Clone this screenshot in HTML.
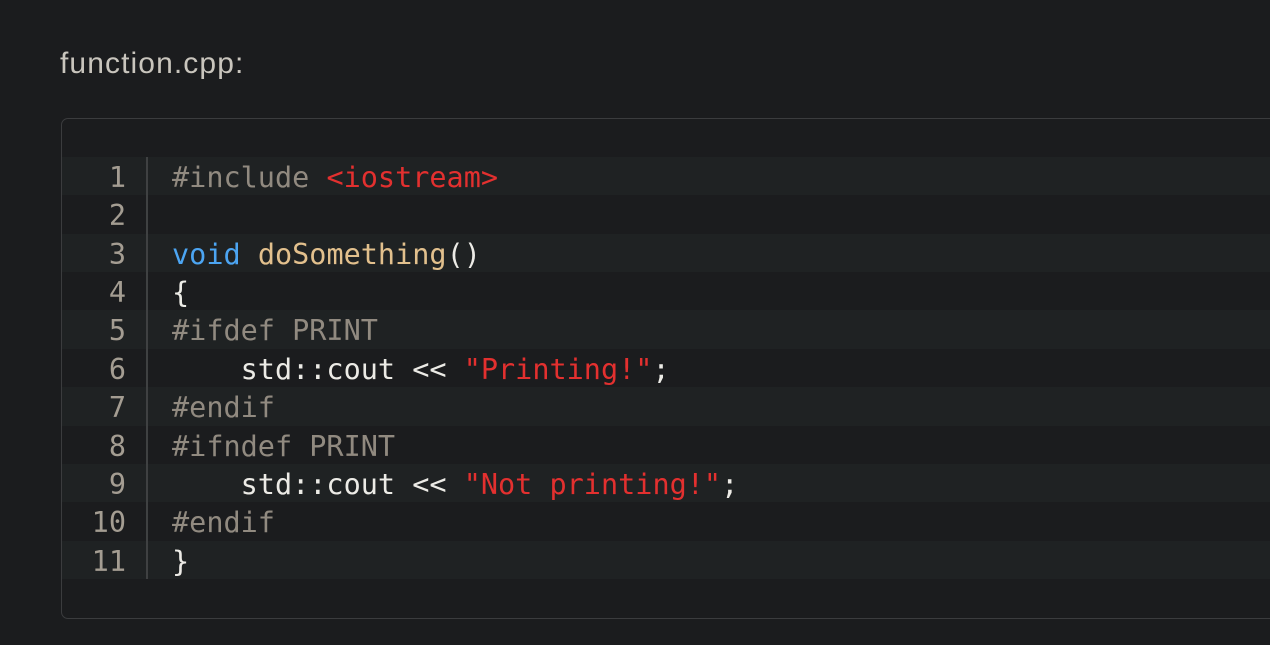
<!DOCTYPE html>
<html><head><meta charset="utf-8"><style>
html,body{margin:0;padding:0;background:#1b1c1e;width:1270px;height:645px;overflow:hidden}
.t{position:absolute;left:60px;top:44px;font-family:"Liberation Sans",sans-serif;font-size:30px;letter-spacing:1.1px;color:#c9c5bd;line-height:40px}
.box{position:absolute;left:61px;top:118px;width:1240px;height:499px;border:1.5px solid #3b3c3e;border-radius:7px;background:#1b1c1e}
.code{position:absolute;left:62px;top:157px;width:1210px;font-family:"DejaVu Sans Mono","Liberation Mono",monospace;font-size:28.5px}
.l{height:38.36px;line-height:38.36px;position:relative;white-space:pre;color:#ecebe6}
.l:nth-child(odd){background:#1f2223}
.n,.c{top:2px}
.n{position:absolute;left:0;width:64px;text-align:right;color:#a49d92}
.c{position:absolute;left:110px}
.g{position:absolute;left:85px;top:157px;width:2px;height:422px;background:#3f4142}
.p{color:#918a80}.s{color:#e3302f}.k{color:#4ca5f2}.f{color:#e2c08d}
</style></head><body>
<div class="t">function.cpp:</div>
<div class="box"></div>
<div class="code">
<div class="l"><span class="n">1</span><span class="c"><span class="p">#include </span><span class="s">&lt;iostream&gt;</span></span></div>
<div class="l"><span class="n">2</span></div>
<div class="l"><span class="n">3</span><span class="c"><span class="k">void</span> <span class="f">doSomething</span>()</span></div>
<div class="l"><span class="n">4</span><span class="c">{</span></div>
<div class="l"><span class="n">5</span><span class="c"><span class="p">#ifdef PRINT</span></span></div>
<div class="l"><span class="n">6</span><span class="c">    std::cout &lt;&lt; <span class="s">"Printing!"</span>;</span></div>
<div class="l"><span class="n">7</span><span class="c"><span class="p">#endif</span></span></div>
<div class="l"><span class="n">8</span><span class="c"><span class="p">#ifndef PRINT</span></span></div>
<div class="l"><span class="n">9</span><span class="c">    std::cout &lt;&lt; <span class="s">"Not printing!"</span>;</span></div>
<div class="l"><span class="n">10</span><span class="c"><span class="p">#endif</span></span></div>
<div class="l"><span class="n">11</span><span class="c">}</span></div>
</div>
<div class="g" style="left:146px"></div>
</body></html>
